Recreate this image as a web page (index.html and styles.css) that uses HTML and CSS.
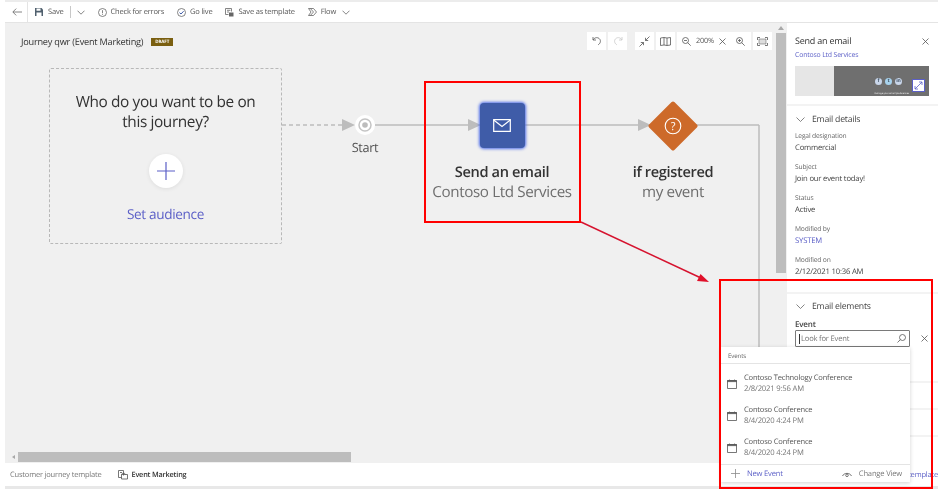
FILE: index.html
```html
<!DOCTYPE html>
<html lang="en">
<head>
<meta charset="utf-8">
<title>Journey qwr</title>
<link rel="stylesheet" href="styles.css">
</head>
<body>
<div class="app">
  <header class="toolbar">
    <button class="back" aria-label="Back"><svg width="10" height="8" viewBox="0 0 10 8"><path d="M10 4H1M4.2 .6 .8 4l3.4 3.4" class="ln"/></svg></button>
    <div class="tools">
      <span class="tool t-save"><svg width="8" height="8" viewBox="0 0 8 8"><path d="M0 0h6.5L8 1.5V8H0z" fill="#50606e"/><path d="M1.5 .6h4v2.2h-4zM1.5 4.6h5V8h-5z" fill="#fff"/></svg>Save</span>
      <span class="sep"></span>
      <svg class="chev c-save" width="8" height="5" viewBox="0 0 8 5"><path d="M.5 .7 4 4.2 7.5 .7" class="ln"/></svg>
      <span class="tool"><svg width="9" height="9" viewBox="0 0 9 9"><circle cx="4.5" cy="4.5" r="4" class="ln"/><path d="M4.5 2.2v3.1M4.5 6v.8" class="ln"/></svg>Check for errors</span>
      <span class="tool"><svg width="9" height="9" viewBox="0 0 9 9"><circle cx="4.5" cy="4.5" r="4" class="ln"/><path d="M2.5 4.6 4 6l2.6-2.8" fill="none" stroke="#3f5ca8"/></svg>Go live</span>
      <span class="tool"><svg width="9" height="9" viewBox="0 0 9 9"><path d="M.5 .5h6v3M.5 .5v6h3M2 2.3h3.4M2 4h2" class="ln"/><path d="M4 4.5h4.5v4H4z" fill="#666"/></svg>Save as template</span>
      <span class="tool t-flow"><svg width="9" height="8" viewBox="0 0 9 8"><path d="M.5 .5h5l3 3.5-3 3.5h-5L3 4z" class="ln"/><path d="M2.5 .7 5.500 4 2.500 7.300" class="ln"/></svg>Flow</span>
      <svg class="chev" width="8" height="5" viewBox="0 0 8 5"><path d="M.5 .7 4 4.2 7.5 .7" class="ln"/></svg>
    </div>
  </header>

  <div class="main">
    <section class="canvas">
      <div class="title-row">
        <span class="title">Journey qwr (Event Marketing)</span>
        <span class="draft">DRAFT</span>
      </div>

      <div class="floating">
        <div class="group">
          <span class="fbtn"><svg width="10" height="10" viewBox="0 0 10 10"><path d="M1 1v3h3M1.2 4C2 1.800 5 .9 7 2.400s2 4.600-.8 6.400" class="ln2"/></svg></span>
          <span class="fbtn"><svg width="10" height="10" viewBox="0 0 10 10"><path d="M9 1v3H6M8.800 4C8 1.800 5 .9 3 2.400s-2 4.600.8 6.400" class="ln3"/></svg></span>
        </div>
        <div class="group g2">
          <span class="fbtn"><svg width="11" height="11" viewBox="0 0 11 11"><path d="M10.500 .5 6.500 4.500M6.500 1.800v2.700h2.700M.5 10.500l4-4M1.800 6.500h2.700v2.700" class="ln2"/></svg></span>
          <span class="fbtn"><svg width="11" height="9" viewBox="0 0 11 9"><path d="M.5 1 4 .5 7 1l3.500-.5v7.500L7 8.500 4 8l-3.500.5zM4 .5V8M7 1v7.500" class="ln2"/></svg></span>
          <span class="fbtn zoom">
            <svg width="9" height="9" viewBox="0 0 9 9"><circle cx="3.500" cy="3.500" r="3" class="ln2"/><path d="M5.700 5.700 8.700 8.700M2 3.500h3" class="ln2"/></svg>
            <span class="zval">200%</span>
            <svg width="7" height="7" viewBox="0 0 7 7"><path d="M.5 .5l6 6M6.500 .5l-6 6" class="ln2"/></svg>
            <svg class="zin" width="9" height="9" viewBox="0 0 9 9"><circle cx="3.500" cy="3.500" r="3" class="ln2"/><path d="M5.700 5.700 8.700 8.700M2 3.500h3M3.500 2v3" class="ln2"/></svg>
          </span>
          <span class="fbtn"><svg width="11" height="9" viewBox="0 0 11 9"><path d="M.5 3V.5H3M8 .5h2.500V3M10.500 6v2.500H8M3 8.500H.5V6" class="ln2"/><path d="M2 2h7v5H2z" fill="#ddd" stroke="#555" stroke-width=".5"/></svg></span>
        </div>
      </div>

      <svg class="wires" width="782" height="440" viewBox="0 0 782 440">
        <path d="M277 102H340" class="wire dashed"/>
        <path d="M370 102H754M754 102V330" class="wire"/>
        <path d="M337 96l13 6-13 6zM463 96l13 6-13 6zM633 96l13 6-13 6z" fill="#bdbdbd"/>
      </svg>

      <div class="audience">
        <h2 class="aud-title">Who do you want to be on this journey?</h2>
        <span class="aud-plus"><svg width="18" height="18" viewBox="0 0 18 18"><path d="M9 0v18M0 9h18" stroke="#5b5fc7" stroke-width="1.200" fill="none"/></svg></span>
        <a class="aud-link">Set audience</a>
      </div>

      <div class="node n-start">
        <span class="start-dot"><svg width="14" height="14" viewBox="0 0 14 14"><circle cx="7" cy="7" r="6" fill="none" stroke="#c4c4c4" stroke-width="1.500"/><circle cx="7" cy="7" r="2.800" fill="#bcbcbc"/></svg></span>
        <span class="start-label">Start</span>
      </div>

      <div class="node n-email">
        <span class="tile"><svg width="18" height="13" viewBox="0 0 18 13"><path d="M.7 .7h16.600v11.600H.7z" fill="none" stroke="#fff" stroke-width="1.200"/><path d="M.7 1 9 7.500 17.300 1" fill="none" stroke="#fff" stroke-width="1.200"/></svg></span>
        <strong class="n-name">Send an email</strong>
        <span class="n-sub">Contoso Ltd Services</span>
      </div>

      <div class="node n-if">
        <span class="diamond"><svg width="50" height="50" viewBox="0 0 50 50"><path d="M25 .5a2 2 0 0 1 1.400 .6L48.900 23.600a2 2 0 0 1 0 2.800L26.400 48.900a2 2 0 0 1-2.800 0L1.100 26.400a2 2 0 0 1 0-2.800L23.600 1.100A2 2 0 0 1 25 .5z" fill="#cd6a2a"/><circle cx="25" cy="25" r="7.800" fill="none" stroke="#fff" stroke-width="1.100"/><text x="25" y="29" text-anchor="middle" class="qmark">?</text></svg></span>
        <strong class="n-name">if registered</strong>
        <span class="n-sub">my event</span>
      </div>

      <div class="vscroll"><span class="varrow"></span><span class="vthumb"></span></div>
      <div class="hscroll"><span class="harrow"></span><span class="hthumb"></span></div>
    </section>

    <aside class="panel">
      <div class="sec sec-head">
        <div class="ph-row"><h3 class="ph-title">Send an email</h3><svg class="ph-x" width="7" height="7" viewBox="0 0 7 7"><path d="M.5 .5l6 6M6.500 .5l-6 6" class="ln2"/></svg></div>
        <a class="link ph-link">Contoso Ltd Services</a>
        <div class="thumb">
          <span class="thumb-l"></span>
          <div class="thumb-r">
            <div class="socials"><i class="soc">f</i><i class="soc s-tw">t</i><i class="soc">in</i></div>
            <span class="tiny">manage your email preferences</span>
            <span class="expand"><svg width="9" height="9" viewBox="0 0 9 9"><path d="M1 8 8 1M5 1h3v3M1 5v3h3" fill="none" stroke="#5b5fc7" stroke-width=".8"/></svg></span>
          </div>
        </div>
      </div>

      <div class="sec sec-details">
        <div class="sec-hd"><svg width="9" height="5" viewBox="0 0 9 5"><path d="M.5 .5 4.500 4.500 8.500 .5" class="ln"/></svg><span>Email details</span></div>
        <dl class="fields">
          <dt>Legal designation</dt><dd>Commercial</dd>
          <dt>Subject</dt><dd>Join our event today!</dd>
          <dt>Status</dt><dd>Active</dd>
          <dt>Modified by</dt><dd class="link">SYSTEM</dd>
          <dt>Modified on</dt><dd>2/12/2021 10:36 AM</dd>
        </dl>
      </div>

      <div class="sec sec-elements">
        <div class="sec-hd"><svg width="9" height="5" viewBox="0 0 9 5"><path d="M.5 .5 4.500 4.500 8.500 .5" class="ln"/></svg><span>Email elements</span></div>
        <label class="ev-label">Event</label>
        <div class="ev-row">
          <div class="ev-input"><span class="caret"></span><span>Look for Event</span><svg width="9" height="9" viewBox="0 0 9 9"><circle cx="5.500" cy="3.500" r="3" class="ln2"/><path d="M3.400 5.600.5 8.500" class="ln2"/></svg></div>
          <svg class="ev-x" width="7" height="7" viewBox="0 0 7 7"><path d="M.5 .5l6 6M6.500 .5l-6 6" class="ln2"/></svg>
        </div>
      </div>
      <div class="stub s1"></div>
      <div class="stub s2"></div>
      <div class="stub s3"></div>
    </aside>
  </div>

  <footer class="footer">
    <span class="f-tpl">Customer journey template</span>
    <span class="f-ev"><svg width="10" height="10" viewBox="0 0 10 10"><path d="M.5 .5h5v5M.5 .5v7h3M2 2.500h2" class="ln2"/><path d="M3.500 4.500h6v4.500h-6zM3.500 4.500l1-1.200h2l1 1.200" class="ln2"/></svg><b>Event Marketing</b></span>
    <a class="link f-link">template</a>
  </footer>
</div>

<div class="lookup">
  <div class="lk-head">Events</div>
  <ul class="lk-list">
    <li class="lk-item"><svg width="10" height="10" viewBox="0 0 10 10"><path d="M.5 1.500h9v8h-9z" class="ln2"/><path d="M.5 1.500h9v1.200h-9zM2.500 .3v1.500M7.500 .3v1.500" fill="#555" stroke="#555" stroke-width=".5"/></svg><div><div class="lk-name">Contoso Technology Conference</div><div class="lk-date">2/8/2021 9:56 AM</div></div></li>
    <li class="lk-item"><svg width="10" height="10" viewBox="0 0 10 10"><path d="M.5 1.500h9v8h-9z" class="ln2"/><path d="M.5 1.500h9v1.200h-9zM2.500 .3v1.500M7.500 .3v1.500" fill="#555" stroke="#555" stroke-width=".5"/></svg><div><div class="lk-name">Contoso Conference</div><div class="lk-date">8/4/2020 4:24 PM</div></div></li>
    <li class="lk-item"><svg width="10" height="10" viewBox="0 0 10 10"><path d="M.5 1.500h9v8h-9z" class="ln2"/><path d="M.5 1.500h9v1.200h-9zM2.500 .3v1.500M7.500 .3v1.500" fill="#555" stroke="#555" stroke-width=".5"/></svg><div><div class="lk-name">Contoso Conference</div><div class="lk-date">8/4/2020 4:24 PM</div></div></li>
  </ul>
  <div class="lk-foot">
    <span class="lk-new"><svg width="9" height="9" viewBox="0 0 9 9"><path d="M4.500 0v9M0 4.500h9" stroke="#8a8a8a" stroke-width=".8" fill="none"/></svg>New Event</span>
    <span class="lk-view"><svg width="10" height="6" viewBox="0 0 10 6"><path d="M.5 5C2 1.500 8 1.500 9.500 5" class="ln2"/><circle cx="5" cy="4.300" r="1.300" class="ln2"/></svg>Change View</span>
  </div>
</div>

<div class="redbox rb1"></div>
<div class="redbox rb2"></div>
<svg class="callout" width="940" height="491" viewBox="0 0 940 491"><path d="M581 222 701 278" stroke="#d6132f" stroke-width="1.500" fill="none"/><path d="M709 282 697 281 700.500 274z" fill="#e0102a"/></svg>
</body>
</html>
```
FILE: styles.css
```css
* { box-sizing: border-box; letter-spacing: -0.025em; }
html, body { margin: 0; padding: 0; background: #fff; }
body {
  position: relative;
  width: 940px;
  height: 491px;
  overflow: hidden;
  font-family: "Open Sans", "Noto Sans", sans-serif;
  text-rendering: geometricPrecision;
  color: #333;
  filter: blur(.3px);
}
svg { display: block; flex: none; }
.ln { fill: none; stroke: #666; stroke-width: .8; }
.ln2 { fill: none; stroke: #555; stroke-width: .8; }
.ln3 { fill: none; stroke: #c8c8c8; stroke-width: .8; }
.link { color: #5b5fc7; }

.app {
  margin: 0 2px 0 5px;
  height: 489px;
  display: flex;
  flex-direction: column;
  border-top: 2px solid #ececec;
  border-bottom: 3px solid #e8e8e8;
}

/* toolbar */
.toolbar {
  height: 21px;
  flex: none;
  display: flex;
  align-items: center;
  background: #fff;
  border-bottom: 1px solid #e4e4e4;
}
.back {
  width: 23px;
  height: 100%;
  padding: 0 0 0 7px;
  border: 0;
  border-right: 1px solid #e4e4e4;
  background: none;
}
.tools {
  display: flex;
  align-items: center;
  gap: 13px;
  padding-left: 7px;
}
.tool {
  display: flex;
  align-items: center;
  gap: 4px;
  font-size: 7.500px;
  color: #555;
  white-space: nowrap;
}
.t-save { gap: 5px; margin-right: -7px; }
.sep { width: 1px; height: 12px; background: #c8c8c8; }
.c-save { margin-left: -7px; }
.t-flow + .chev { margin-left: -7px; }

/* main */
.main { flex: 1; display: flex; min-height: 0; }
.canvas {
  position: relative;
  width: 782px;
  flex: none;
  background: #f0f0f0;
}
.title-row {
  display: flex;
  align-items: center;
  gap: 8px;
  padding: 12px 0 0 16px;
}
.title { font-size: 9.200px; color: #333; white-space: nowrap; }
.draft {
  background: #7a5f10;
  color: #fff;
  font-size: 4.500px;
  font-weight: 700;
  padding: 1px 4px;
  line-height: 6px;
}

.floating {
  position: absolute;
  left: 582px;
  top: 9px;
  display: flex;
  gap: 8px;
}
.group { display: flex; gap: 2px; }
.g2 { gap: 2px; }
.fbtn {
  min-width: 19px;
  height: 18px;
  background: #fff;
  display: flex;
  align-items: center;
  justify-content: center;
}
.zoom { width: 74px; gap: 5px; justify-content: flex-start; padding-left: 5px; }
.zval { font-size: 7.300px; color: #555; }
.zin { margin-left: 5px; }

.wires { position: absolute; left: 0; top: 0; }
.wire { stroke: #bcbcbc; stroke-width: 1.500; fill: none; }
.dashed { stroke-dasharray: 4 3; }

.audience {
  position: absolute;
  left: 44px;
  top: 45px;
  width: 233px;
  height: 176px;
  border: 1.500px dashed #b8b8b8;
  border-radius: 2px;
  display: flex;
  flex-direction: column;
  align-items: center;
  padding-top: 23px;
}
.aud-title {
  margin: 0;
  width: 200px;
  font-size: 15.400px;
  font-weight: 500;
  line-height: 20px;
  text-align: center;
  color: #333;
}
.aud-plus {
  width: 34px;
  height: 34px;
  margin-top: 22px;
  border-radius: 50%;
  background: #fff;
  box-shadow: 0 1px 4px rgba(0,0,0,.08);
  display: flex;
  align-items: center;
  justify-content: center;
}
.aud-link { margin-top: 16px; font-size: 13.600px; color: #5b5fc7; }

.node {
  position: absolute;
  display: flex;
  flex-direction: column;
  align-items: center;
  white-space: nowrap;
}
.n-start { left: 340px; top: 92px; width: 40px; }
.start-dot {
  width: 20px;
  height: 20px;
  border-radius: 50%;
  background: #fff;
  display: flex;
  align-items: center;
  justify-content: center;
}
.start-label { margin-top: 4px; font-size: 12.700px; line-height: 16px; color: #555; }
.n-email { left: 419px; top: 80px; width: 156px; }
.tile {
  width: 45px;
  height: 45px;
  border-radius: 4px;
  background: #3f5ca8;
  box-shadow: 0 0 3px 1px #4f6ee8;
  display: flex;
  align-items: center;
  justify-content: center;
}
.n-name { margin-top: 14px; font-size: 14.600px; font-weight: 600; line-height: 20px; color: #333; }
.n-sub { font-size: 15.200px; line-height: 20px; color: #6e6e6e; }
.n-if { left: 618px; top: 78px; width: 100px; }
.diamond { width: 50px; height: 50px; display: block; margin-bottom: 11px; }
.n-if .n-name { margin-top: 0; }
.qmark { font-size: 11px; fill: #fff; font-family: "Open Sans", sans-serif; }

.vscroll {
  position: absolute;
  right: 0;
  top: 0;
  width: 12px;
  padding: 3px 1px 0;
  display: flex;
  flex-direction: column;
  align-items: center;
  gap: 3px;
}
.varrow { width: 0; height: 0; border: 3px solid transparent; border-top: 0; border-bottom: 4px solid #a8a8a8; }
.vthumb { width: 10px; height: 240px; background: #bdbdbd; }
.hscroll {
  position: absolute;
  left: 0;
  top: 429px;
  width: 770px;
  height: 10px;
  display: flex;
  align-items: center;
  padding-left: 7px;
  gap: 3px;
}
.harrow { width: 0; height: 0; border: 2.500px solid transparent; border-left: 0; border-right: 3px solid #a8a8a8; }
.hthumb { width: 333px; height: 10px; background: #bdbdbd; }

/* panel */
.panel { flex: 1; background: #f3f3f3; display: flex; flex-direction: column; gap: 2px; min-width: 0; }
.sec { background: #fff; padding: 0 8px 0 8px; }
.sec-head { height: 81px; padding-top: 12px; }
.ph-row { display: flex; justify-content: space-between; align-items: center; padding-right: 1px; }
.ph-title { margin: 0; font-size: 9px; font-weight: 400; line-height: 12px; color: #333; }
.ph-link { display: block; font-size: 6.900px; line-height: 10px; margin-top: 4px; }
.thumb { display: flex; height: 30px; margin-top: 5px; width: 134px; }
.thumb-l { width: 39px; background: #e6e6e6; }
.thumb-r { flex: 1; position: relative; background: #6f6f6f; }
.socials { position: absolute; left: 41px; top: 12px; display: flex; gap: 3px; }
.soc {
  width: 7px; height: 7px; border-radius: 50%;
  background: #c9d6ea;
  color: #456;
  font: normal 700 5px/7px "Open Sans", sans-serif;
  text-align: center;
}
.s-tw { background: #a8d3ee; }
.tiny { position: absolute; left: 40px; top: 26px; font-size: 2.500px; line-height: 3px; color: #eee; white-space: nowrap; }
.expand {
  position: absolute; left: 78px; top: 13px;
  width: 13px; height: 13px;
  background: #fff;
  border: 1px solid #5b5fc7;
  display: flex; align-items: center; justify-content: center;
}
.sec-details { height: 186px; padding-top: 7px; }
.sec-hd { display: flex; align-items: center; gap: 7px; font-size: 8.700px; line-height: 12px; color: #444; padding-left: 1px; }
.sec-hd span { font-weight: 500; }
.fields { margin: 6px 0 0; }
.fields dt { font-size: 6.700px; line-height: 10px; color: #666; }
.fields dd { margin: 2px 0 8px; font-size: 7.700px; line-height: 11px; color: #444; white-space: nowrap; }
.fields dd.link { color: #5b5fc7; }
.sec-elements { height: 87px; padding-top: 6px; }
.ev-label { display: block; margin-top: 8px; font-size: 8px; line-height: 10px; font-weight: 600; color: #444; }
.ev-row { display: flex; align-items: center; gap: 11px; }
.ev-input {
  width: 115px;
  height: 17px;
  border: 1px solid #7a7a7a;
  border-radius: 1px;
  display: flex;
  align-items: center;
  padding: 0 3px;
  font-size: 7.600px;
  color: #777;
}
.ev-input span:nth-child(2) { flex: 1; }
.caret { width: 1px; height: 10px; background: #333; margin-right: 1px; }
.stub { background: #fff; height: 25px; flex: none; }
.stub.s3 { flex: 1; }

/* footer */
.footer {
  height: 23px;
  flex: none;
  display: flex;
  align-items: center;
  background: #fff;
  padding-left: 5px;
  font-size: 7.500px;
  color: #777;
}
.f-tpl { white-space: nowrap; }
.f-ev { display: flex; align-items: center; gap: 4px; margin-left: 16px; color: #333; }
.f-ev b { font-weight: 600; font-size: 7.300px; }
.f-link { margin-left: auto; }

/* lookup popup */
.lookup {
  position: absolute;
  left: 721px;
  top: 347px;
  width: 189px;
  height: 135px;
  background: #fff;
  box-shadow: 0 1px 4px rgba(0,0,0,.18);
  display: flex;
  flex-direction: column;
}
.lk-head {
  height: 17px;
  padding-left: 7px;
  font-size: 6.200px;
  line-height: 17px;
  color: #666;
  border-bottom: 1px solid #e4e4e4;
}
.lk-list { list-style: none; margin: 0; padding: 4px 0 0; flex: 1; }
.lk-item { height: 32px; display: flex; align-items: center; gap: 7px; padding-left: 6px; }
.lk-name { font-size: 7.550px; line-height: 11px; color: #555; white-space: nowrap; }
.lk-date { font-size: 7.700px; line-height: 11px; color: #777; white-space: nowrap; }
.lk-foot {
  height: 21px;
  display: flex;
  align-items: center;
  justify-content: space-between;
  padding: 0 8px 0 10px;
  border-top: 1px solid #e4e4e4;
  font-size: 7.600px;
}
.lk-new { display: flex; align-items: center; gap: 7px; color: #5b5fc7; }
.lk-view { display: flex; align-items: center; gap: 7px; color: #777; }

/* annotation overlays */
.redbox { position: absolute; border: 2px solid #f00; }
.rb1 { left: 424px; top: 81px; width: 157px; height: 142px; }
.rb2 { left: 719px; top: 279px; width: 214px; height: 210px; }
.callout { position: absolute; left: 0; top: 0; pointer-events: none; }
```
